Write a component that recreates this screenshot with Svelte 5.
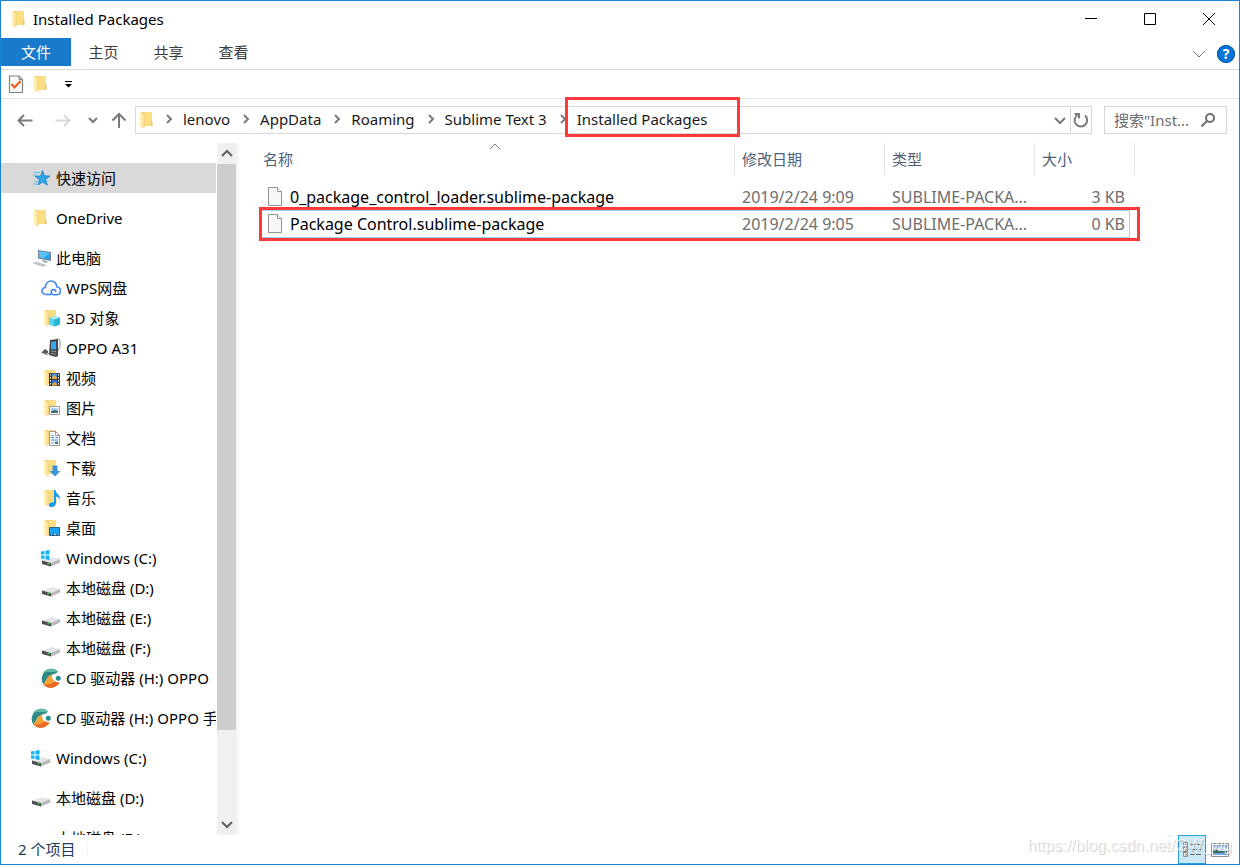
<script lang="ts">
	interface Place {
		label: string;
		icon: string;
		child?: boolean;
	}

	interface PackageFile {
		name: string;
		modified: string;
		type: string;
		size: string;
	}

	const title = 'Installed Packages';
	const tabs = ['主页', '共享', '查看'];
	const crumbs = ['lenovo', 'AppData', 'Roaming', 'Sublime Text 3', 'Installed Packages'];

	const groups: Place[][] = [
		[{ label: '快速访问', icon: 'star' }],
		[{ label: 'OneDrive', icon: 'folder' }],
		[
			{ label: '此电脑', icon: 'pc' },
			{ label: 'WPS网盘', icon: 'cloud', child: true },
			{ label: '3D 对象', icon: 'objects', child: true },
			{ label: 'OPPO A31', icon: 'phone', child: true },
			{ label: '视频', icon: 'video', child: true },
			{ label: '图片', icon: 'picture', child: true },
			{ label: '文档', icon: 'document', child: true },
			{ label: '下载', icon: 'download', child: true },
			{ label: '音乐', icon: 'music', child: true },
			{ label: '桌面', icon: 'desktop', child: true },
			{ label: 'Windows (C:)', icon: 'system', child: true },
			{ label: '本地磁盘 (D:)', icon: 'drive', child: true },
			{ label: '本地磁盘 (E:)', icon: 'drive', child: true },
			{ label: '本地磁盘 (F:)', icon: 'drive', child: true },
			{ label: 'CD 驱动器 (H:) OPPO', icon: 'disc', child: true }
		],
		[{ label: 'CD 驱动器 (H:) OPPO 手', icon: 'disc' }],
		[{ label: 'Windows (C:)', icon: 'system' }],
		[{ label: '本地磁盘 (D:)', icon: 'drive' }],
		[{ label: '本地磁盘 (E:)', icon: 'drive' }]
	];

	const files: PackageFile[] = [
		{
			name: '0_package_control_loader.sublime-package',
			modified: '2019/2/24 9:09',
			type: 'SUBLIME-PACKA...',
			size: '3 KB'
		},
		{
			name: 'Package Control.sublime-package',
			modified: '2019/2/24 9:05',
			type: 'SUBLIME-PACKA...',
			size: '0 KB'
		}
	];

	// share of the tree that is visible, in percent
	const visibleShare = 87;

	let current = $state('快速访问');
	let focused = $state(1);
	let view = $state('details');
</script>

{#snippet folder()}
	<path d="M4 2h11v14H4z" fill="#f3cd68" />
	<path d="M7 2h8v14H7z" fill="#fbdd85" />
	<path d="M14 11h1.500v5H14z" fill="#eec55e" />
	<path d="M3 2l4 2v14.500l-4-2z" fill="#ffebac" />
	<path d="M7 4v14" stroke="#e8c468" stroke-width=".7" />
{/snippet}

{#snippet drive()}
	<path d="M1 12.500L11 9l8 2-9 4z" fill="#e4e5e7" />
	<path d="M1 12.500l9 2.500v3.500L1 16z" fill="#4b4e50" />
	<path d="M10 15l9-4v3.500l-9 4z" fill="#b5b7ba" />
	<path d="M6.500 15.300l1.800.500" stroke="#3fe04a" stroke-width="1.500" />
{/snippet}

{#snippet icon(name: string)}
	<svg class="icon" viewBox="0 0 20 20" aria-hidden="true">
		{#if name === 'star'}
			<path d="M11.500 2.500l2 5.300 5.500.200-4.400 3.500 1.700 5.700-4.800-3.200-4.500 3 1.400-5.200L4 8.300 9.600 8z" fill="#2fa3e6" stroke="#1581c6" stroke-width=".8" />
			<path d="M3 4.500h6M2 7h4M3 13.500h3M2 16h4" stroke="#62bdf0" />
		{:else if name === 'folder'}
			{@render folder()}
		{:else if name === 'pc'}
			<path d="M7 2l13 2v9L7 10.500z" fill="#75818c" />
			<path d="M8 3l11 2v7L8 9.500z" fill="#27a4ee" />
			<path d="M8 3l11 2-7 5.400-4-.900z" fill="#5bc2f8" />
			<path d="M12 12l5 1.500-2 1.500-4-1.500z" fill="#9ca5ac" />
			<path d="M1 15l4-1.500L16 17l-4 2z" fill="#d3d8dc" />
			<path d="M3 15l10 3M5 14.500l9 2.800" stroke="#a7afb5" stroke-width=".6" />
		{:else if name === 'cloud'}
			<path d="M4.500 16.500C1.500 16 .3 13.500 1.300 11.500c.7-1.300 1.800-1.900 3-2C4.500 5.500 7 3 10 3c3.200 0 5.700 2.500 5.700 5.700 2.500.300 3.800 2 3.800 4 0 2.300-1.700 4-4 4h-3c-2 0-3.300-3.200-1.200-4.700 1.700-1.200 3.500 0 3.500 2" fill="none" stroke="#3f83f0" stroke-width="1.600" />
			<path d="M4.500 16.500h5.500" stroke="#3f83f0" stroke-width="1.600" />
		{:else if name === 'phone'}
			<path d="M15 3c0-3 4-3 4 0v5l-2 5" fill="none" stroke="#8d9296" />
			<path d="M9 2l8-1v17l-2 1-7-2z" fill="#44484c" />
			<path d="M10 4l5-.700v8.200l-5-.500z" fill="#35a9f2" />
			<path d="M10 13l5 .600M10 15.500l5 .700" stroke="#92979b" />
			<path d="M1 14l3-3 3 2v2l-3 1-3-1z" fill="#55595d" />
			<path d="M4 16c2 1 3 0 4-1" fill="none" stroke="#777" />
		{:else if name === 'system'}
			{@render drive()}
			<path d="M0 3.500L3.500 3v3.500H0zM4.500 2.800L8.500 2v4.500h-4zM0 7.500h3.500V11L0 10.500zM4.500 7.500h4V12l-4-.800z" fill="#0fb4f0" />
		{:else if name === 'drive'}
			{@render drive()}
		{:else if name === 'disc'}
			<path d="M17 3.500A9.800 9.800 0 0 0 2.500 16.500C5 14 5.500 8 11.500 6.500 14 6 16 5 17 3.500z" fill="#2b8a84" />
			<path d="M17 3.500A9.800 9.800 0 0 0 1.500 5.500C6 2.500 12 5.500 17 3.500z" fill="#62b9aa" />
			<path d="M2.500 16.500C5 14 5.500 8 11.500 6.500 10 10 12 14 18.500 14.500A9.800 9.800 0 0 1 2.500 16.500z" fill="#f6a035" />
			<path d="M2.500 16.500C7 17 11 16 14 13.500c1.300.600 2.800 1 4.500 1A9.800 9.800 0 0 1 2.500 16.500z" fill="#e8672a" />
			<circle cx="17.300" cy="10.300" r="2.500" fill="#268e8b" />
		{:else}
			{@render folder()}
			{#if name === 'objects'}
				<path d="M8 10l6-2 5 1.500v7l-5 2-6-2z" fill="#27b5d8" />
				<path d="M8 10l6-2 5 1.500-6 2z" fill="#b0edf7" />
				<path d="M8 10l5 1.500v7l-5-2z" fill="#5ed2e8" />
			{:else if name === 'video'}
				<path d="M8 5h11v13H8z" fill="#383838" />
				<path d="M11 5.500h5V11h-5z" fill="#4b8fe0" />
				<path d="M11 12h5v5.500h-5z" fill="#3973cc" />
				<path d="M11 9l3-2 2 3v1h-5zM11 16l3-2 2 2v1.500h-5z" fill="#e4a73c" />
				<path d="M9.500 6v12M17.500 6v12" stroke="#fff" stroke-dasharray="1.500 1.500" />
			{:else if name === 'picture'}
				<path d="M8.500 8.500h10v8h-10z" fill="#fff" stroke="#9b9b9b" />
				<path d="M10 10h7v5h-7z" fill="#a8d5f6" />
				<path d="M10 13.500l3-1.500 4 1v2h-7z" fill="#3c6b70" />
			{:else if name === 'document'}
				<path d="M8.500 3.500h6l4 4v10h-10z" fill="#fff" stroke="#999" />
				<path d="M14.500 3.500v4h4" fill="none" stroke="#999" />
				<path d="M10.500 7.500h2M10 9.500h3M14.500 9.500H17M10 12h7M10 15h3" stroke="#3c8dd0" />
				<path d="M14 13.500h3v2.500h-3z" fill="#3e78a0" />
			{:else if name === 'download'}
				<path d="M11.500 7.500h5v5.500h3L14 18.500 8.500 13h3z" fill="#3b94dc" />
			{:else if name === 'music'}
				<path d="M13 2h1.500c0 4 5 4 4.500 10-1-2.500-2.500-3-4-3.500V15c0 2.500-2 4-4.500 4-2.800 0-3.500-2.500-1.500-3.800 1.200-.900 2.500-1 4-.700z" fill="#159df0" />
			{:else if name === 'desktop'}
				<path d="M8.500 9.500h10v8h-10z" fill="#1ba1f5" stroke="#22668f" />
				<path d="M9 16.500h9" stroke="#17558a" />
				<path d="M10 16.500h1M13 16.500h2M16.500 16.500h1" stroke="#cfe9fb" />
			{/if}
		{/if}
	</svg>
{/snippet}

{#snippet chevron(d: string)}
	<svg class="chevron" viewBox="0 0 12 12" aria-hidden="true"><path {d} /></svg>
{/snippet}

<div class="window">
	<header class="titlebar">
		{@render icon('folder')}
		<h1>{title}</h1>
		<div class="controls">
			<button aria-label="最小化">
				<svg viewBox="0 0 12 12"><path d="M0 5.500h12" /></svg>
			</button>
			<button aria-label="最大化">
				<svg viewBox="0 0 12 12"><path d="M.5.500h11v11H.5z" /></svg>
			</button>
			<button aria-label="关闭">
				<svg viewBox="0 0 12 12"><path d="M0 0l12 12M12 0L0 12" /></svg>
			</button>
		</div>
	</header>

	<nav class="ribbon" aria-label="功能区">
		<button class="tab file">文件</button>
		{#each tabs as tab}
			<button class="tab">{tab}</button>
		{/each}
		<button class="expand" aria-label="展开功能区">{@render chevron('M0 3l6 6 6-6')}</button>
		<button class="help" aria-label="帮助">?</button>
	</nav>

	<div class="quickbar">
		<button aria-label="属性">
			<svg class="icon" viewBox="0 0 20 20">
				<path d="M3.500 2h9.500l3.500 3.500v13h-13z" fill="#f8f8f8" stroke="#858585" stroke-width="1.200" />
				<path d="M13 2v3.500h3.500" fill="none" stroke="#858585" />
				<path d="M5.500 10l3 3.500 6-6.500" fill="none" stroke="#ee5a1c" stroke-width="2" />
			</svg>
		</button>
		<button aria-label="新建文件夹">{@render icon('folder')}</button>
		<button class="customize" aria-label="自定义快速访问工具栏">
			<svg viewBox="0 0 7 7" width="7" height="7"><path d="M0 0h7v1H0zM0 3h7L3.500 6.500z" /></svg>
		</button>
	</div>

	<div class="location">
		<div class="history">
			<button aria-label="后退">
				<svg viewBox="0 0 16 16"><path d="M15.500 8.500H1.500M7 3L1.500 8.500 7 14" /></svg>
			</button>
			<button class="forward" aria-label="前进" disabled>
				<svg viewBox="0 0 16 16"><path d="M.5 8.500h14M9 3l5.500 5.500L9 14" /></svg>
			</button>
			<button class="recent" aria-label="最近浏览的位置">{@render chevron('M2 4l4 4 4-4')}</button>
			<button aria-label="上移">
				<svg viewBox="0 0 16 16"><path d="M8 16V2.500M1.500 8.500L8 2l6.500 6.500" /></svg>
			</button>
		</div>

		<div class="address">
			{@render icon('folder')}
			<ol class="crumbs">
				{#each crumbs as crumb, i}
					<li>
						{@render chevron('M4 2l4 4-4 4')}
						<a href="#{crumb}" class:marked={i === crumbs.length - 1}>{crumb}</a>
					</li>
				{/each}
			</ol>
			<button class="drop" aria-label="以前的位置">{@render chevron('M1 4l5 5 5-5')}</button>
			<button class="refresh" aria-label="刷新">
				<svg viewBox="0 0 16 16"><path d="M4.500 3A6.300 6.300 0 1 0 12 3.500M1.500 2H6v4.500" /></svg>
			</button>
		</div>

		<label class="search">
			<input type="text" placeholder="搜索&quot;Inst..." aria-label="搜索" />
			<svg viewBox="0 0 16 16" aria-hidden="true">
				<circle cx="10" cy="6" r="4" />
				<path d="M7 9l-5.500 5.500" />
			</svg>
		</label>
	</div>

	<div class="body">
		<aside class="sidebar">
			<nav class="tree" aria-label="导航窗格">
				{#each groups as group}
					<ul>
						{#each group as place}
							<li>
								<button
									class="place"
									class:child={place.child}
									class:current={place.label === current}
									onclick={() => (current = place.label)}
								>
									{@render icon(place.icon)}
									<span>{place.label}</span>
								</button>
							</li>
						{/each}
					</ul>
				{/each}
			</nav>
			<div class="scrollbar">
				<button aria-label="向上滚动">{@render chevron('M1 8l5-5 5 5')}</button>
				<div class="track">
					<div class="thumb" style="height: {visibleShare}%"></div>
				</div>
				<button aria-label="向下滚动">{@render chevron('M1 3l5 5 5-5')}</button>
			</div>
		</aside>

		<main class="files">
			<table>
				<thead>
					<tr>
						<th class="name" aria-sort="ascending">
							<button>名称 <span class="sort">{@render chevron('M1 8l5-5 5 5')}</span></button>
						</th>
						<th class="date"><button>修改日期</button></th>
						<th class="type"><button>类型</button></th>
						<th class="size"><button>大小</button></th>
					</tr>
				</thead>
				<tbody>
					{#each files as file, i}
						<tr class:focused={i === focused} onclick={() => (focused = i)}>
							<td class="name">
								<div class="file-name">
									<svg class="sheet" viewBox="0 0 16 19" aria-hidden="true">
										<path d="M1.500.500h9l4 4v14h-13z" fill="#f7f8f8" stroke="#949494" />
										<path d="M10.500.500v4h4" fill="#fff" stroke="#949494" />
									</svg>
									<span>{file.name}</span>
								</div>
							</td>
							<td>{file.modified}</td>
							<td>{file.type}</td>
							<td class="amount">{file.size}</td>
						</tr>
					{/each}
				</tbody>
			</table>
		</main>
	</div>

	<footer class="status">
		<span class="count">2 个项目</span>
		<div class="views">
			<button class:active={view === 'details'} aria-label="详细信息" onclick={() => (view = 'details')}>
				<svg viewBox="0 0 18 16" width="18" height="16">
					<path d="M.5.500h4v4h-4zM.5 5.500h4v4h-4zM.5 10.500h4v4h-4z" fill="#fff" stroke="#8f8f8f" />
					<path d="M2 2h1.500v1.500H2z" fill="#3a7cc0" />
					<path d="M2 7h1.500v1.500H2z" fill="#5d8f4a" />
					<path d="M2 12h1.500v1.500H2z" fill="#c0392b" />
					<path d="M7 2.500h11M7 7.500h11M7 12.500h11" stroke="#666" stroke-dasharray="5 1" />
				</svg>
			</button>
			<button class:active={view === 'icons'} aria-label="大缩略图" onclick={() => (view = 'icons')}>
				<svg viewBox="0 0 18 14" width="18" height="14">
					<path d="M.5.500h17v13H.5z" fill="#fff" stroke="#8f8f8f" />
					<path d="M2 2h14v10H2z" fill="#6fa9ea" />
					<path d="M2 6l3-3 2 2 3-2 6 2v3H2z" fill="#d7e9fa" />
					<path d="M2 7l2-1 4 2 8 .500V10H2z" fill="#3d6a62" />
				</svg>
			</button>
		</div>
		<span class="watermark">https://blog.csdn.net/GW_wg</span>
	</footer>
</div>

<style>
	:global(body) {
		margin: 0;
	}

	.window {
		box-sizing: border-box;
		display: flex;
		flex-direction: column;
		height: 100vh;
		border: 1px solid #1883d7;
		background: #fff;
		color: #000;
		font-family: 'Noto Sans', 'Noto Sans CJK SC', sans-serif;
		font-size: 15px;
		line-height: 20px;
	}

	button {
		display: flex;
		align-items: center;
		justify-content: center;
		margin: 0;
		padding: 0;
		border: 0;
		background: none;
		color: inherit;
		font: inherit;
	}

	svg {
		flex: none;
		fill: none;
	}

	.icon {
		width: 20px;
		height: 20px;
	}

	.chevron {
		width: 12px;
		height: 12px;
		stroke: #7a7a7a;
		stroke-width: 2;
	}

	.titlebar {
		display: flex;
		box-sizing: border-box;
		align-items: center;
		height: 37px;
		padding: 0 1px 2px 8px;
	}

	h1 {
		flex: 1;
		margin: 0 0 0 4px;
		font-size: 15px;
		font-weight: 400;
	}

	.controls {
		display: flex;
		height: 100%;
	}

	.controls button {
		width: 59px;
	}

	.controls svg {
		width: 12px;
		height: 12px;
		stroke: #000;
	}

	.ribbon {
		display: flex;
		align-items: center;
		height: 31px;
		border-bottom: 1px solid #dadbdc;
	}

	.tab {
		width: 65px;
		height: 28px;
		align-self: flex-start;
		color: #3b3b3b;
	}

	.tab.file {
		width: 70px;
		background: #1979ca;
		color: #fff;
	}

	.expand {
		width: 20px;
		margin-left: auto;
	}

	.expand .chevron,
	.sort .chevron {
		stroke-width: 1;
	}

	.help {
		width: 18px;
		height: 18px;
		margin: 0 4px 0 8px;
		border-radius: 50%;
		background: #0a74d6;
		box-shadow: inset 0 0 0 1px #075aa8;
		color: #fff;
		font-size: 14px;
		font-weight: 700;
	}

	.quickbar {
		display: flex;
		align-items: center;
		gap: 5px;
		height: 28px;
		padding-left: 5px;
		border-bottom: 1px solid #e5e5e5;
	}

	.customize {
		width: 20px;
		margin-left: 2px;
	}

	.customize svg {
		fill: #000;
	}

	.location {
		display: flex;
		align-items: center;
		height: 42px;
		padding: 0 12px 2px 0;
	}

	.history {
		display: flex;
		width: 134px;
		padding-left: 16px;
		box-sizing: border-box;
		gap: 22px;
	}

	.history svg {
		width: 16px;
		height: 16px;
		stroke: #7a7a7a;
		stroke-width: 2;
	}

	.history .forward svg {
		stroke: #d8d8d8;
	}

	.history .recent {
		width: 16px;
		margin: 0 -12px 0 -8px;
	}

	.history .recent .chevron {
		width: 12px;
		height: 12px;
	}

	.address,
	.search {
		display: flex;
		box-sizing: border-box;
		height: 28px;
		border: 1px solid #d9d9d9;
	}

	.address {
		flex: 1;
		align-items: center;
		padding-left: 1px;
	}

	.crumbs {
		display: flex;
		flex: 1;
		margin: 0;
		padding: 0 0 2px;
		list-style: none;
	}

	.crumbs li {
		display: flex;
		align-items: center;
	}

	.crumbs .chevron {
		margin: 0 8px 0 6px;
	}

	.crumbs li + li .chevron {
		margin-left: 10px;
	}

	.crumbs a {
		position: relative;
		color: #1a1a1a;
		text-decoration: none;
	}

	.crumbs .marked::after {
		content: '';
		position: absolute;
		inset: -12px -33px -8px -12px;
		border: 3px solid #fc3a3a;
	}

	.drop {
		width: 20px;
		height: 100%;
	}

	.refresh {
		width: 21px;
		height: 100%;
		border-left: 1px solid #d9d9d9;
	}

	.refresh svg {
		width: 16px;
		height: 16px;
		stroke: #7a7a7a;
		stroke-width: 2;
	}

	.search {
		align-items: center;
		width: 123px;
		margin-left: 12px;
		padding: 0 10px 0 9px;
	}

	.search input {
		flex: 1;
		min-width: 0;
		padding: 0;
		border: 0;
		outline: 0;
		background: none;
		font: inherit;
	}

	.search input::placeholder {
		color: #6d6d6d;
		opacity: 1;
	}

	.search svg {
		width: 16px;
		height: 16px;
		stroke: #6d6d6d;
		stroke-width: 2;
	}

	.body {
		display: flex;
		flex: 1;
		min-height: 0;
	}

	.sidebar {
		display: flex;
		flex: none;
		width: 237px;
		border-right: 1px solid #f2f2f2;
	}

	.tree {
		flex: 1;
		min-width: 0;
		padding-top: 20px;
		overflow: hidden;
	}

	.tree ul {
		margin: 0 0 10px;
		padding: 0;
		list-style: none;
	}

	.place {
		justify-content: flex-start;
		gap: 5px;
		width: 100%;
		height: 30px;
		padding-left: 30px;
		overflow: hidden;
		white-space: nowrap;
	}

	.place.child {
		padding-left: 40px;
	}

	.place.current {
		background: #d9d9d9;
	}

	.scrollbar {
		display: flex;
		flex-direction: column;
		width: 20px;
		margin: 0 1px;
		background: #f0f0f0;
	}

	.scrollbar button {
		height: 21px;
	}

	.scrollbar .chevron {
		stroke: #606060;
	}

	.track {
		flex: 1;
	}

	.thumb {
		margin-right: 1px;
		background: #cdcdcd;
	}

	.files {
		flex: 1;
		min-width: 0;
		padding-left: 17px;
	}

	table {
		border-spacing: 0;
		table-layout: fixed;
		width: 879px;
	}

	th {
		padding: 0 0 9px;
		font-weight: 400;
	}

	th.date,
	th.type {
		width: 150px;
	}

	th.size {
		width: 100px;
	}

	th button {
		position: relative;
		justify-content: flex-start;
		width: 100%;
		height: 32px;
		padding-left: 7px;
		border-right: 1px solid #e5e5e5;
		color: #4c607a;
	}

	.sort {
		position: absolute;
		top: -2px;
		left: 50%;
		display: flex;
		margin-left: -6px;
	}

	tbody tr {
		position: relative;
	}

	td {
		height: 25px;
		padding: 0 0 2px 7px;
		color: #6d6d6d;
		font-size: 16px;
		white-space: nowrap;
	}

	td.name {
		padding-left: 11px;
		color: #000;
	}

	td.amount {
		padding-right: 10px;
		text-align: right;
	}

	.file-name {
		display: flex;
		align-items: center;
		gap: 7px;
	}

	.sheet {
		width: 16px;
		height: 19px;
	}

	/* both frames hang on the first cell but span the whole row */
	.focused .name::before {
		content: '';
		position: absolute;
		inset: -1px 5px 0 5px;
		border: 1px solid #99d1ff;
	}

	.focused .name::after {
		content: '';
		position: absolute;
		inset: -4px -5px -3px 3px;
		border: 3px solid #fc3a3a;
	}

	.status {
		position: relative;
		display: flex;
		align-items: center;
		height: 29px;
		padding-left: 17px;
		color: #1e395b;
	}

	.count {
		margin-bottom: 2px;
		padding-right: 12px;
		border-right: 1px solid #f2f2f2;
		line-height: 14px;
	}

	.views {
		display: flex;
		height: 100%;
		margin-left: auto;
		padding-right: 5px;
	}

	.views button {
		box-sizing: border-box;
		width: 28px;
		height: 100%;
		border: 1px solid transparent;
	}

	.views .active {
		border-color: #26a0da;
		background: #cbe8f6;
	}

	.watermark {
		position: absolute;
		right: 7px;
		bottom: 8px;
		color: rgb(255 255 255 / 70%);
		font-family: 'Liberation Sans', Arial, sans-serif;
		font-size: 16px;
		line-height: 20px;
		text-shadow: 1px 1px 1px rgb(0 0 0 / 20%);
		pointer-events: none;
	}
</style>
